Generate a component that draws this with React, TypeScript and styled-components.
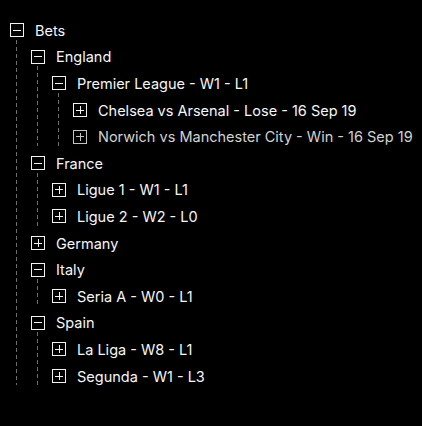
import React from 'react';
import styled, { createGlobalStyle } from 'styled-components';

interface BetNode {
  label: string;
  open?: boolean;
  muted?: boolean;
  children?: BetNode[];
}

const TREE: BetNode = {
  label: 'Bets',
  open: true,
  children: [
    {
      label: 'England',
      open: true,
      children: [
        {
          label: 'Premier League - W1 - L1',
          open: true,
          children: [
            { label: 'Chelsea vs Arsenal - Lose - 16 Sep 19' },
            { label: 'Norwich vs Manchester City - Win - 16 Sep 19', muted: true },
          ],
        },
      ],
    },
    {
      label: 'France',
      open: true,
      children: [{ label: 'Ligue 1 - W1 - L1' }, { label: 'Ligue 2 - W2 - L0' }],
    },
    { label: 'Germany', children: [{ label: 'Bundesliga - W0 - L0' }] },
    {
      label: 'Italy',
      open: true,
      children: [{ label: 'Seria A - W0 - L1' }],
    },
    {
      label: 'Spain',
      open: true,
      children: [{ label: 'La Liga - W8 - L1' }, { label: 'Segunda - W1 - L3' }],
    },
  ],
};

const GlobalStyle = createGlobalStyle`
  html, body {
    margin: 0;
    background: #000;
  }
  body {
    font-family: Inter, "Noto Sans", sans-serif;
  }
`;

const Page = styled.div`
  padding: 17px 0 0 10px;
  min-height: 426px;
  box-sizing: border-box;
`;

const Row = styled.div<{ $muted?: boolean }>`
  display: flex;
  align-items: center;
  gap: 11px;
  height: 26.6px;
  color: ${p => (p.$muted ? '#d2d2d2' : '#f6f6f6')};
  font-size: 14.5px;
  white-space: nowrap;
`;

const Toggle = styled.span<{ $open?: boolean; $muted?: boolean }>`
  position: relative;
  flex: none;
  width: 14px;
  height: 14px;
  box-sizing: border-box;
  border: 1px solid ${p => (p.$muted ? '#c4c4c4' : '#f2f2f2')};

  &::before,
  &::after {
    content: '';
    position: absolute;
    background: ${p => (p.$muted ? '#c4c4c4' : '#f2f2f2')};
  }
  &::before {
    left: 2px;
    right: 2px;
    top: 5.5px;
    height: 1px;
  }
  &::after {
    display: ${p => (p.$open ? 'none' : 'block')};
    top: 2px;
    bottom: 2px;
    left: 5.5px;
    width: 1px;
  }
`;

const Children = styled.div`
  position: relative;
  padding-left: 21px;

  &::before {
    content: '';
    position: absolute;
    left: 6px;
    top: -4px;
    bottom: 4px;
    width: 1px;
    background: repeating-linear-gradient(
      to bottom,
      #6e6e6e 0 4px,
      transparent 4px 7px
    );
  }
`;

const Node: React.FC<{ node: BetNode }> = ({ node }) => (
  <div>
    <Row $muted={node.muted}>
      <Toggle $open={node.open} $muted={node.muted} />
      <span>{node.label}</span>
    </Row>
    {node.open && node.children && (
      <Children>
        {node.children.map(child => (
          <Node key={child.label} node={child} />
        ))}
      </Children>
    )}
  </div>
);

export default function App() {
  return (
    <>
      <GlobalStyle />
      <Page>
        <Node node={TREE} />
      </Page>
    </>
  );
}
